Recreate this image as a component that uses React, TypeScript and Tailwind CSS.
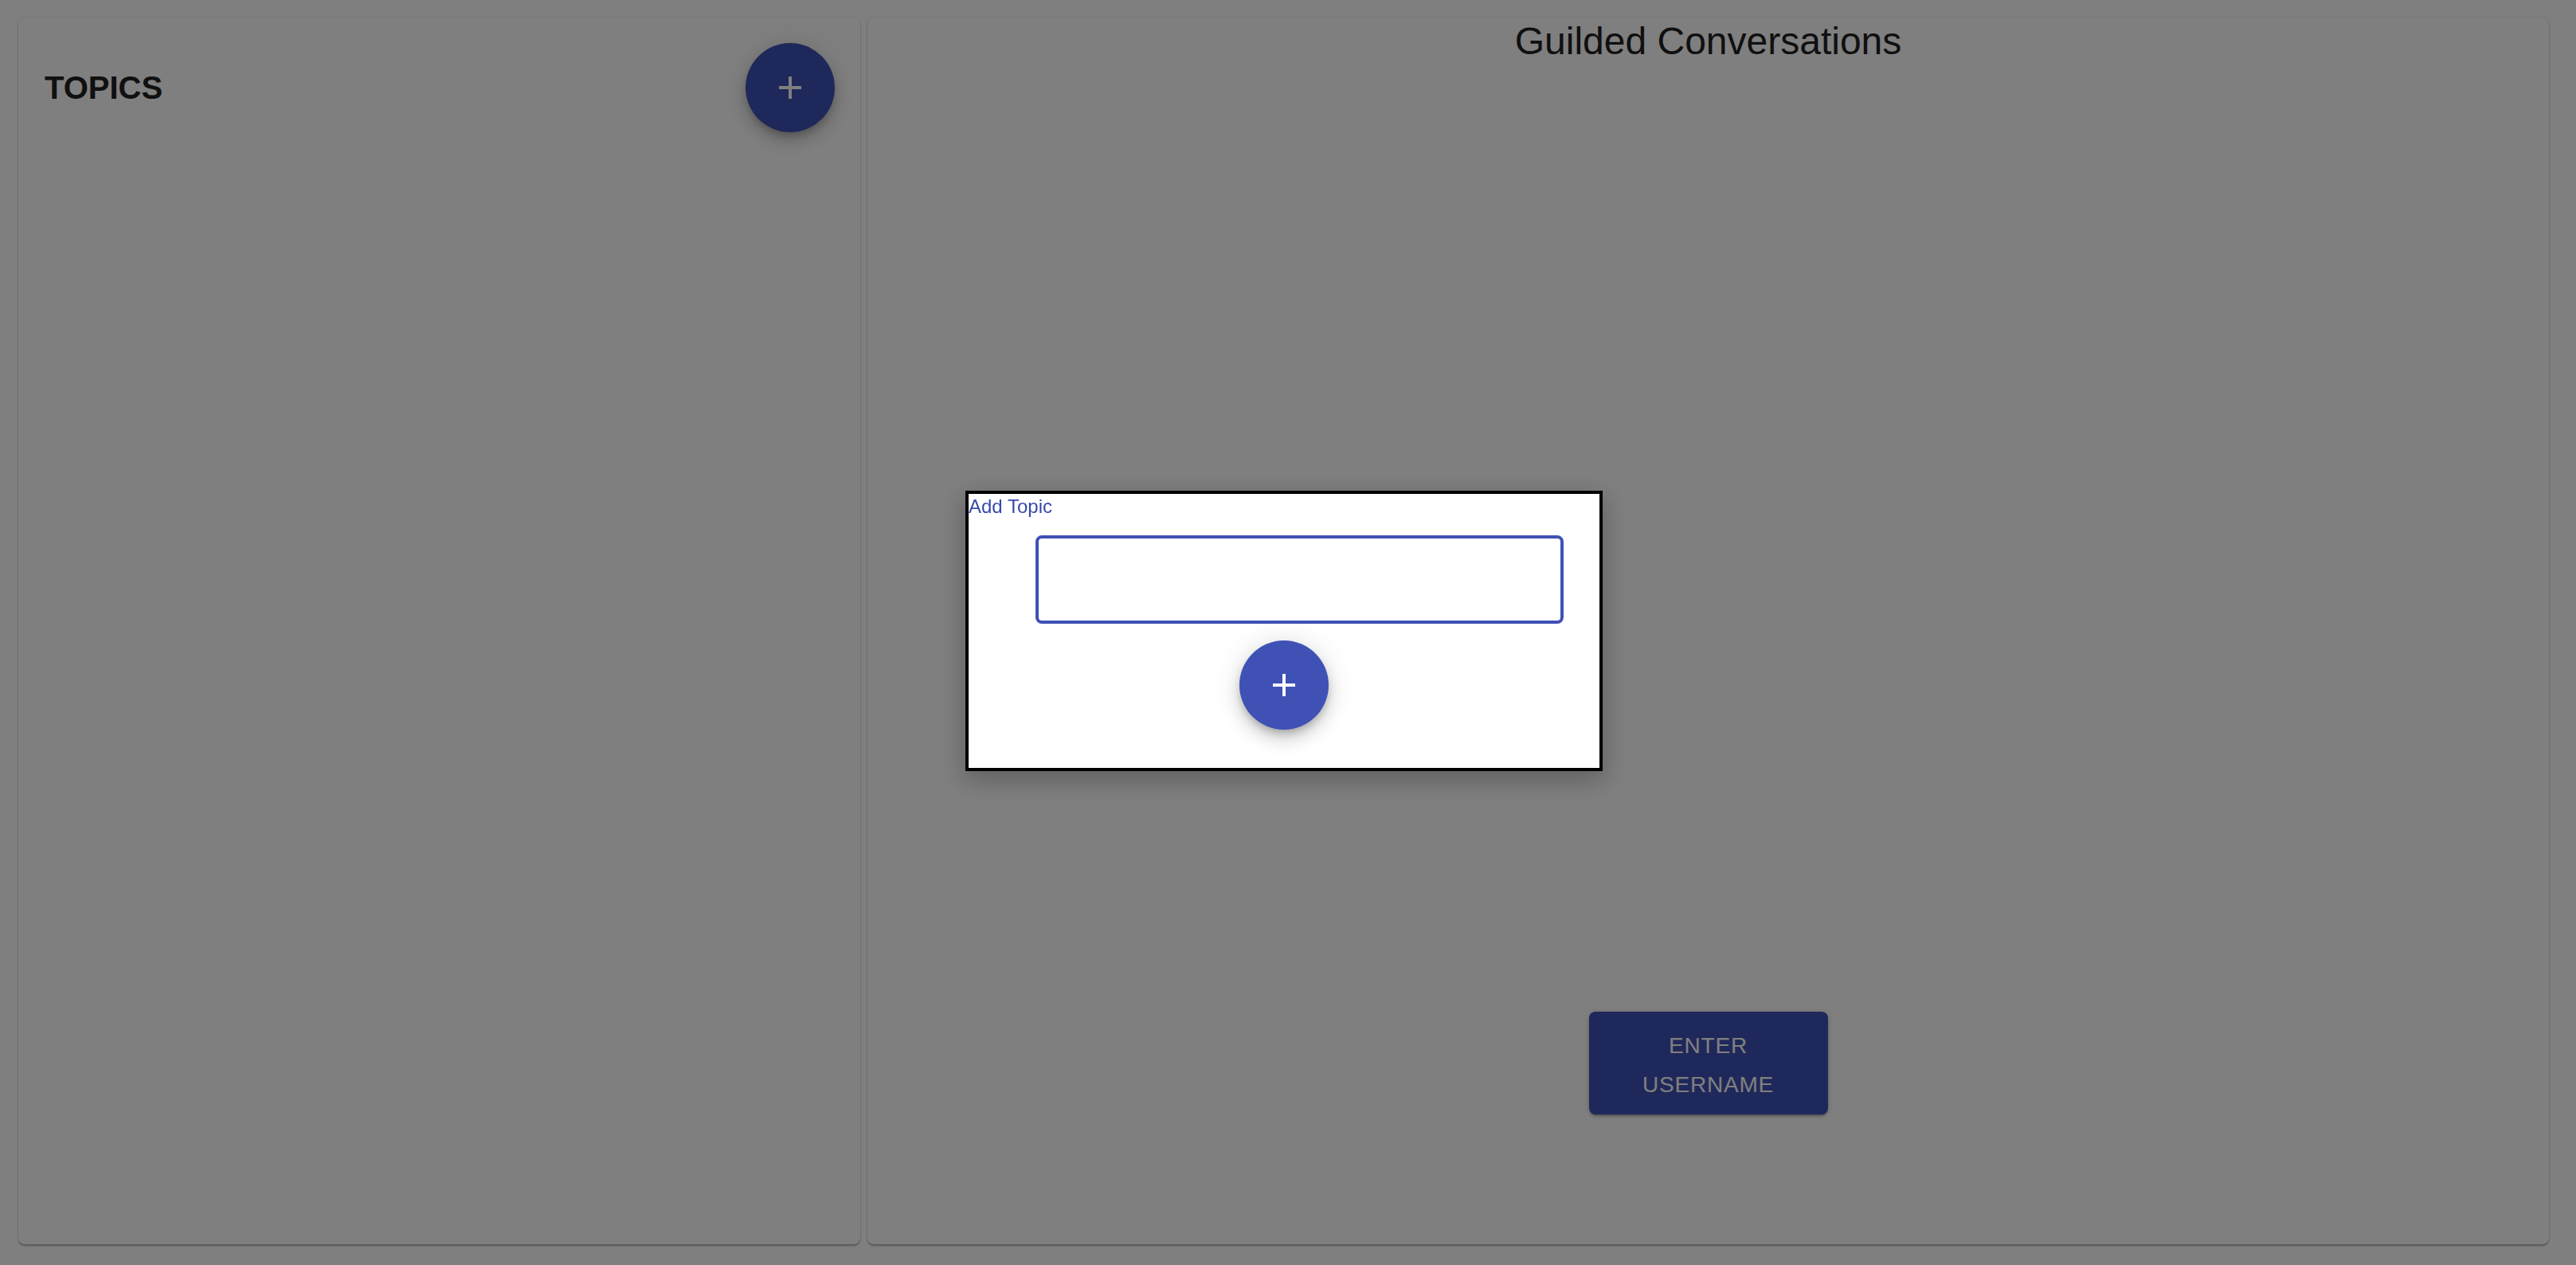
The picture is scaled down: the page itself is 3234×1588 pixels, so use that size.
import React from "react"

const font = { fontFamily: '"Liberation Sans", Arial, Helvetica, sans-serif' }

function PlusIcon({ className }: { className?: string }) {
  return (
    <svg viewBox="0 0 24 24" className={className} fill="currentColor">
      <path d="M19 13h-6v6h-2v-6H5v-2h6V5h2v6h6v2z" />
    </svg>
  )
}

function Fab() {
  return (
    <button className="w-[112px] h-[112px] shrink-0 rounded-full bg-[#3f51b5] text-white flex items-center justify-center shadow-[0_6px_10px_-2px_rgba(0,0,0,0.2),0_12px_20px_0_rgba(0,0,0,0.14),0_2px_36px_0_rgba(0,0,0,0.12)]">
      <PlusIcon className="w-[48px] h-[48px]" />
    </button>
  )
}

function TopicsPanel() {
  return (
    <div className="w-[1057px] h-[1540px] shrink-0 bg-white rounded-[8px] shadow-[0_2px_2px_rgba(0,0,0,0.3),0_0_3px_rgba(0,0,0,0.12)]">
      <div className="flex items-center justify-between pl-[33px] pr-[32px] pt-[32px]">
        <h6 className="text-[40px] font-bold leading-[48px] text-[#212121]">TOPICS</h6>
        <Fab />
      </div>
    </div>
  )
}

function ConversationPanel() {
  return (
    <div className="flex-1 h-[1540px] bg-white rounded-[8px] shadow-[0_2px_2px_rgba(0,0,0,0.3),0_0_3px_rgba(0,0,0,0.12)] flex flex-col items-center">
      <h5 className="text-[48px] leading-[56px] text-[#212121] pt-[2px]">Guilded Conversations</h5>
      <button className="mt-auto mb-[163px] w-[300px] pt-[18px] pb-[13px] px-[32px] rounded-[8px] bg-[#3f51b5] text-white text-[28px] leading-[49px] tracking-[0.8px] uppercase shadow-[0_3px_2px_-1px_rgba(0,0,0,0.2),0_2px_4px_0_rgba(0,0,0,0.14),0_1px_10px_0_rgba(0,0,0,0.12)]">
        Enter Username
      </button>
    </div>
  )
}

function AddTopicDialog() {
  return (
    <div className="fixed inset-0 bg-black/50 flex items-center justify-center pr-[10px] pb-[5px]">
      <div className="w-[800px] bg-white border-[4px] border-black flex flex-col pt-[3px] pb-[48px] shadow-[0_10px_30px_2px_rgba(0,0,0,0.25)]">
        <p className="text-[24px] leading-[26px] text-[#3949ab]">Add Topic</p>
        <input
          type="text"
          className="mt-[23px] ml-[84px] w-[663px] h-[111px] rounded-[8px] border-[4px] border-[#3f51b5] outline-none px-[24px] text-[32px]"
        />
        <div className="mt-[21px] flex justify-center">
          <Fab />
        </div>
      </div>
    </div>
  )
}

export default function App() {
  return (
    <div style={font} className="h-[1588px] w-full bg-white flex gap-[9px] pl-[23px] pr-[34px] pt-[22px] overflow-hidden">
      <TopicsPanel />
      <ConversationPanel />
      <AddTopicDialog />
    </div>
  )
}
